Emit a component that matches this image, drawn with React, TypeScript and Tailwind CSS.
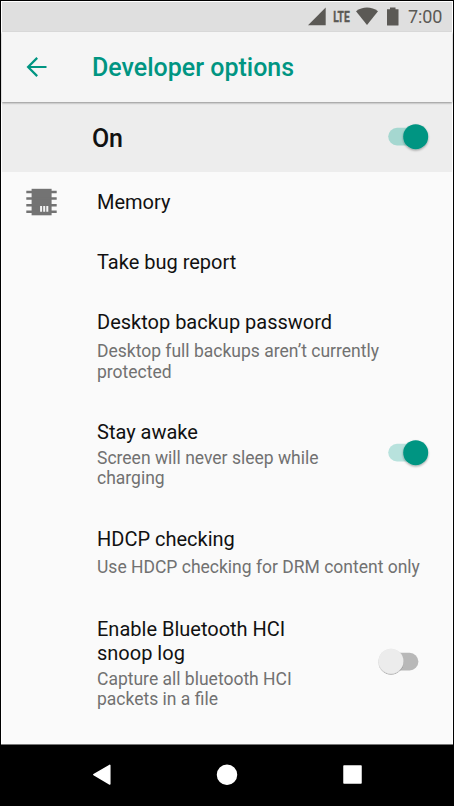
import type { ReactNode } from "react";

function Toggle({ on, track }: { on: boolean; track: string }) {
  return (
    <svg className="block h-[34px] w-[56px] shrink-0" viewBox="0 0 56 34" role="switch" aria-checked={on}>
      <defs>
        <filter id={on ? "lift-on" : "lift-off"} x="-30%" y="-30%" width="160%" height="160%">
          <feDropShadow dx="0" dy={on ? 1.2 : 0.7} stdDeviation={on ? 0.9 : 0.6} floodOpacity={on ? 0.35 : 0.45} />
        </filter>
      </defs>
      <rect x="12.2" y="7.8" width="30.2" height="17.6" rx="8.8" fill={track} />
      <circle
        cx={on ? 39.7 : 15}
        cy={on ? 16.7 : 16.2}
        r="12.5"
        fill={on ? "#009582" : "#ececec"}
        filter={on ? "url(#lift-on)" : "url(#lift-off)"}
      />
    </svg>
  );
}

function Row({ className, control, children }: { className: string; control?: ReactNode; children: ReactNode }) {
  return (
    <div className={"flex shrink-0 pl-[95px] " + className}>
      <div className="w-[279px] shrink-0 whitespace-nowrap">{children}</div>
      {control}
    </div>
  );
}

function Title({ children }: { children: ReactNode }) {
  return <div className="w-max text-[20px] leading-6 text-[#111]">{children}</div>;
}

function Summary({ className = "", children }: { className?: string; children: ReactNode }) {
  return <div className={"w-max text-[17.5px] leading-[20.5px] text-[#717171] " + className}>{children}</div>;
}

function MemoryIcon() {
  return (
    <svg className="block h-[28px] w-[32px]" viewBox="0 0 32 28" fill="#737373">
      <rect x="5.6" y="0.8" width="20" height="26.5" />
      <path d="M.3 2.8h30.400v2.500H.3zM.3 9.300h30.400v2.500H.3zM.3 16h30.400v2.500H.3zM.3 22.500h30.400V25H.3z" />
      <path d="M14.100 18h2v5.800h-2zM17.200 18h2v5.800h-2zM20.300 18h2v5.800h-2z" fill="#f4f4f4" />
    </svg>
  );
}

export default function App() {
  return (
    <div className="flex h-[806px] w-[454px] flex-col overflow-hidden border border-black bg-[#fafafa] font-['Roboto',sans-serif]">
      <div className="flex min-h-0 flex-1 flex-col border-x border-t border-white">
        <header className="flex h-[30px] shrink-0 bg-[#dfdfdf] text-[#5b5955]">
          <svg className="block h-[30px] w-[103px] ml-[303px] shrink-0" viewBox="305 2 103 30" fill="#5b5955">
            <path d="M325.7 7.5V25.3H308z" />
            <text x="333.200" y="22.3" fontSize="15.500" fontWeight="700" textLength="16.5" lengthAdjust="spacingAndGlyphs" stroke="#5b5955" strokeWidth="0.400">LTE</text>
            <path d="M356 11.2C362.5 6.3 371.5 6.3 378 11.2L367 25z" />
            <path d="M387 9.2h3V7.5h5.5v1.7h3v15.9q0 .5-.5.5h-10.500q-.5 0-.5-.5z" />
          </svg>
          <span className="-mt-px text-[18px] leading-[32px] tracking-[-0.1px]">7:00</span>
        </header>
        <div className="relative z-10 flex h-[70px] shrink-0 items-center bg-[#f5f5f5] shadow-[0_1px_2px_#00000066]">
          <svg className="ml-[24px] block h-[22px] w-[21px]" viewBox="0 0 21 22" fill="none" stroke="#009582" strokeWidth="2.2">
            <path d="M20.500 11H2.200M11.200 1.900L2.100 11l9.100 9.100" />
          </svg>
          <h1 className="ml-[45px] whitespace-nowrap pt-[2px] text-[25px] font-medium leading-[30px] text-[#009582]">Developer options</h1>
        </div>
        <div className="flex h-[70px] shrink-0 items-center bg-[#ededed] pl-[90px]">
          <span className="w-[284px] pt-[3px] text-[25px] font-medium leading-[30px] tracking-[-0.3px] text-[#111]">On</span>
          <Toggle on track="#a5d7d0" />
        </div>
        <main className="flex min-h-0 flex-1 flex-col">
          <div className="flex h-[60px] shrink-0 pl-[24px] pt-[16px]">
            <div className="w-[71px]"><MemoryIcon /></div>
            <div className="pt-[2px]"><Title>Memory</Title></div>
          </div>
          <Row className="h-[60px] pt-[18px]"><Title>Take bug report</Title></Row>
          <Row className="h-[110px] pt-[18px]">
            <Title>Desktop backup password</Title>
            <Summary className="mt-[7px]">Desktop full backups aren’t currently<br />protected</Summary>
          </Row>
          <Row className="h-[106px] pt-[18px]" control={<div className="pt-[16px]"><Toggle on track="#b8e2dd" /></div>}>
            <Title>Stay awake</Title>
            <Summary className="mt-[3.500px]">Screen will never sleep while<br />charging</Summary>
          </Row>
          <Row className="h-[91px] pt-[19px]">
            <Title>HDCP checking</Title>
            <Summary className="mt-[6px]">Use HDCP checking for DRM content only</Summary>
          </Row>
          <Row className="h-[120px] pt-[18px]" control={<div className="pt-[28px]"><Toggle on={false} track="#b8b8b8" /></div>}>
            <Title>Enable Bluetooth HCI<br />snoop log</Title>
            <Summary className="mt-[3.500px]">Capture all bluetooth HCI<br />packets in a file</Summary>
          </Row>
        </main>
      </div>
      <nav className="h-[61px] shrink-0 border-t border-[#777] bg-black">
        <svg className="block h-[60px] w-[452px]" viewBox="1 745 452 60" fill="white" stroke="white" strokeWidth="1.500" strokeLinejoin="round">
          <path d="M109.800 765.300V784l-16-9.300z" />
          <circle cx="227" cy="774.700" r="9.500" />
          <rect x="344" y="766" width="17" height="17" />
        </svg>
      </nav>
    </div>
  );
}
